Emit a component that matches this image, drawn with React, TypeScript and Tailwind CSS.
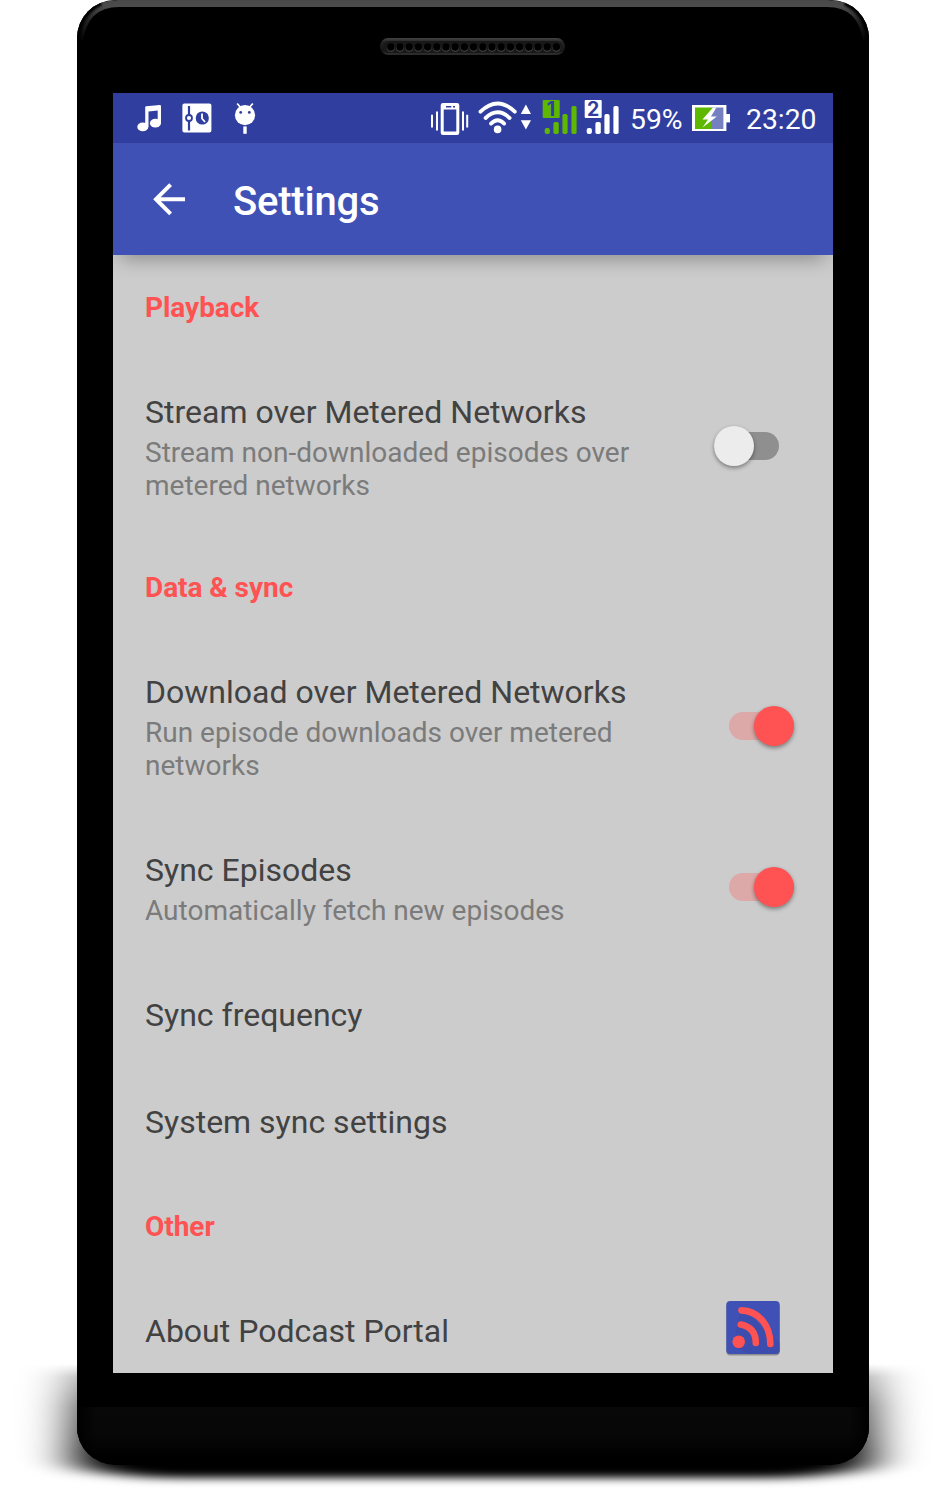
import React from "react";

function StatusIcon({ x, w, className = "", children }: { x: number; w: number; className?: string; children: React.ReactNode }) {
  return (
    <svg width={w} height={50} viewBox={`${x} 93 ${w} 50`} className={`shrink-0 ${className}`}>
      {children}
    </svg>
  );
}

function Signal({ x, n, color, className }: { x: number; n: string; color: string; className?: string }) {
  return (
    <StatusIcon x={0} w={36} className={className}>
      <g fill={color}>
        <rect x="0.7" y="100" width="17" height="18" rx="1" />
        <rect x="2.7" y="128" width="5.2" height="6" rx="2" />
        <rect x="11.4" y="122" width="5.4" height="12" rx="1.8" />
        <rect x="20.4" y="114" width="5.2" height="20" rx="1.8" />
        <rect x="29.4" y="106" width="5.2" height="28" rx="1.8" />
      </g>
      <text x={x} y="115.7" textAnchor="middle" fontSize="19.5" fontWeight="700" fontFamily="Inter, sans-serif" fill="#303f9f">
        {n}
      </text>
    </StatusIcon>
  );
}

function StatusBar() {
  return (
    <div className="flex h-[50px] items-center bg-[#303f9f] text-[28.3px] leading-[50px] text-white">
      <StatusIcon x={136} w={26} className="ml-[23px]">
        <path d="M145.2 107.2Q145.2 106.3 146.2 106.2L159.8 105Q161 105 161 106V123.4H157.7V110.6L148.5 111.6V127H145.2Z" fill="#fff" />
        <ellipse cx="142.8" cy="126.9" rx="5.5" ry="4.4" fill="#fff" />
        <ellipse cx="155.4" cy="123.2" rx="5.5" ry="4.4" fill="#fff" />
      </StatusIcon>
      <StatusIcon x={182} w={30} className="ml-5">
        <rect x="182.4" y="103.4" width="29" height="29" rx="2" fill="#fff" />
        <path d="M189 106V130.5" stroke="#303f9f" strokeWidth="2.2" />
        <circle cx="189" cy="118" r="3" fill="#fff" stroke="#303f9f" strokeWidth="1.8" />
        <circle cx="202.3" cy="118" r="6.6" fill="#303f9f" />
        <path d="M202 113.5V118.5L205 122" stroke="#fff" strokeWidth="1.8" fill="none" />
      </StatusIcon>
      <StatusIcon x={234} w={22} className="ml-[22px]">
        <circle cx="245" cy="115.2" r="10.1" fill="#fff" />
        <path d="M237.2 103.5L241 108M252.8 103.5L249 108" stroke="#fff" strokeWidth="1.8" />
        <circle cx="240.7" cy="112.4" r="1.4" fill="#303f9f" />
        <circle cx="249.3" cy="112.4" r="1.4" fill="#303f9f" />
        <rect x="243.3" y="126.4" width="3.4" height="7.4" fill="#fff" />
      </StatusIcon>

      <StatusIcon x={430} w={39} className="ml-[174px]">
        <path fillRule="evenodd" d="M443 103H457Q459.3 103 459.3 105.2V132.8Q459.3 135 457 135H443Q440.7 135 440.7 132.8V105.2Q440.7 103 443 103ZM443.7 109.6V131.6H456.3V109.6Z" fill="#fff" />
        <path d="M446 106.7H451.3M453 106.7H455" stroke="#303f9f" strokeWidth="1.6" />
        <path d="M432 114.8V127.4M437 111.4V130.4M463 111.4V130.4M467.2 114.8V127.4" stroke="#fff" strokeWidth="2" />
      </StatusIcon>
      <StatusIcon x={478} w={40} className="ml-[9px]">
        <g fill="none" stroke="#fff" strokeWidth="3.8" strokeLinecap="round">
          <path d="M480.5 111.7Q497.6 95.4 514.8 111.7" />
          <path d="M485.6 118Q497.6 106.6 509.6 118" />
          <path d="M491 123.6Q497.6 117 504.2 123.6" />
        </g>
        <circle cx="497.6" cy="129.4" r="3.8" fill="#fff" />
      </StatusIcon>
      <StatusIcon x={520} w={12} className="ml-0.5">
        <path d="M525.9 104.5L531 114H520.8ZM525.9 129.6L531 120.2H520.8Z" fill="#fff" />
      </StatusIcon>
      <Signal x={9} n="1" color="#5fb800" className="ml-[10px]" />
      <Signal x={9.2} n="2" color="#fff" className="ml-[6px]" />
      <span className="ml-[10px] w-[61px] whitespace-nowrap pt-[3px]">59%</span>
      <StatusIcon x={692} w={38} className="ml-[1px]">
        <rect x="692" y="105" width="34.4" height="26" fill="#fff" />
        <rect x="726" y="114" width="4" height="8.4" fill="#fff" />
        <rect x="695" y="107.5" width="16" height="21.5" fill="#5fb800" />
        <rect x="711" y="107.5" width="12.4" height="21.5" fill="#7580c1" />
        <path d="M713 107.6L702.4 119.6H708L702.6 127.6L716.8 116.4H711L716.4 107.6Z" fill="#fff" />
      </StatusIcon>
      <span className="ml-4 whitespace-nowrap pt-[3px]">23:20</span>
    </div>
  );
}

function AppBar() {
  return (
    <div className="flex h-28 items-center bg-[#3f51b5] text-white">
      <svg width="34" height="34" viewBox="0 0 34 34" className="-mt-px ml-[39px] shrink-0">
        <path d="M18.6 2.6L4 17.2L18.6 31.8M4 17.2H33" fill="none" stroke="#fff" strokeWidth="4" />
      </svg>
      <h1 className="ml-[47px] pt-[5px] text-[40px] font-medium leading-[47px] tracking-[-0.2px]">Settings</h1>
    </div>
  );
}

function Section({ children }: { children: React.ReactNode }) {
  return <h2 className="h-[104px] pl-8 pt-9 text-[28px] font-bold leading-[33px] tracking-[-0.05px] text-[#ff5252]">{children}</h2>;
}

function Switch({ on = false }: { on?: boolean }) {
  return on ? (
    <div className="mr-[39px] flex h-7 w-[65px] items-center justify-end rounded-full bg-[#dda8a8]">
      <div className="size-10 shrink-0 rounded-full bg-[#ff5252] shadow-[0_2px_4px_rgba(0,0,0,0.4)]" />
    </div>
  ) : (
    <div className="mr-[54px] flex h-7 w-[65px] items-center rounded-full bg-[#8f8f8f]">
      <div className="size-10 shrink-0 rounded-full bg-[#ececec] shadow-[0_2px_4px_rgba(0,0,0,0.4)]" />
    </div>
  );
}

function Row({ title, summary, className, children }: { title: string; summary?: string; className: string; children?: React.ReactNode }) {
  return (
    <div className={`flex justify-between pl-8 pt-[34px] ${className}`}>
      <div className="w-[520px]">
        <div className="whitespace-nowrap text-[32px] leading-[38px] text-[#424242]">{title}</div>
        {summary && <div className="mt-[5px] text-[28px] leading-[33px] text-[#7b7b7b]">{summary}</div>}
      </div>
      {children}
    </div>
  );
}

function PortalIcon() {
  return (
    <svg width="56" height="58" viewBox="0 0 56 58" className="-mt-3 mr-[52px]">
      <rect x="1.3" y="2.6" width="53.4" height="53" rx="4" fill="#000" opacity="0.3" />
      <rect x="1.3" y="1" width="53.4" height="53" rx="4" fill="#3f51b5" />
      <path d="M16 8L54.7 43V50Q54.7 54 50.7 54H24L8 46Z" fill="#3b4ba9" opacity="0.6" />
      <circle cx="13.7" cy="41.8" r="6.3" fill="#ff5252" />
      <path d="M15.7 24.6Q30.8 27.5 30.8 43M16.5 10.4C34 11 45.3 26 45.3 44" fill="none" stroke="#ff5252" strokeWidth="6.6" strokeLinecap="round" />
    </svg>
  );
}

function Speaker() {
  const holes = Array.from({ length: 19 }, (_, i) => 10.8 + i * 9.2);
  return (
    <svg width="186" height="18" viewBox="0 0 186 18" className="mx-auto block">
      <defs>
        <linearGradient id="grille" x2="0" y2="1">
          <stop offset="0" stopColor="#444" />
          <stop offset="0.25" stopColor="#222" />
          <stop offset="0.8" stopColor="#161616" />
          <stop offset="1" stopColor="#3b3b3b" />
        </linearGradient>
      </defs>
      <rect x="0" y="0" width="185" height="16.8" rx="8.2" fill="url(#grille)" />
      <rect x="3" y="3" width="179" height="12" rx="6" fill="#181818" />
      {holes.map((x) => (
        <g key={x}>
          <circle cx={x} cy="9.8" r="3.9" fill="#484848" />
          <circle cx={x} cy="9" r="3.7" fill="#000" />
        </g>
      ))}
    </svg>
  );
}

function GroundShadow() {
  return (
    <svg width="945" height="1490" viewBox="0 0 945 1490" className="absolute left-0 top-0">
      <defs>
        <filter id="soft" filterUnits="userSpaceOnUse" x="-60" y="1300" width="1065" height="200">
          <feGaussianBlur stdDeviation="25 4.5" />
        </filter>
        <linearGradient id="fade" gradientUnits="userSpaceOnUse" x1="0" x2="0" y1="1364" y2="1450">
          <stop offset="0" stopColor="#fff" stopOpacity="0" />
          <stop offset="0.15" stopColor="#fff" stopOpacity="0.4" />
          <stop offset="0.5" stopColor="#fff" stopOpacity="0.75" />
          <stop offset="1" stopColor="#fff" />
        </linearGradient>
        <mask id="fadeMask" maskUnits="userSpaceOnUse" x="0" y="1350" width="945" height="140">
          <rect y="1350" width="945" height="140" fill="url(#fade)" />
        </mask>
      </defs>
      <g mask="url(#fadeMask)">
        <path d="M72 1350L75 1462L90 1471L150 1478H796L856 1471L871 1462L874 1350Z" fill="#000" filter="url(#soft)" />
      </g>
    </svg>
  );
}

function FrameShine() {
  return (
    <svg width="792" height="1465" viewBox="0 0 792 1465" className="absolute left-0 top-0">
      <defs>
        <linearGradient id="rim" x2="0" y2="1">
          <stop offset="0" stopColor="#484848" />
          <stop offset="0.16" stopColor="#4c4c4c" />
          <stop offset="0.5" stopColor="#222" />
          <stop offset="1" stopColor="#000" />
        </linearGradient>
        <linearGradient id="chin" x2="0" y2="1">
          <stop offset="0" stopColor="#080808" />
          <stop offset="0.5" stopColor="#070707" />
          <stop offset="1" stopColor="#000" />
        </linearGradient>
        <linearGradient id="chinEdges">
          <stop offset="0" stopColor="#000" />
          <stop offset="0.025" stopColor="#000" stopOpacity="0" />
          <stop offset="0.975" stopColor="#000" stopOpacity="0" />
          <stop offset="1" stopColor="#000" />
        </linearGradient>
        <filter id="rimBlur">
          <feGaussianBlur stdDeviation="1.2" />
        </filter>
      </defs>
      <path d="M0 42Q0 0 42 0H750Q792 0 792 42H786Q782 7 750 7H42Q10 7 6 42Z" fill="url(#rim)" />
      <path d="M1 42Q1 14 24 3" fill="none" stroke="#000" strokeWidth="5" filter="url(#rimBlur)" />
      <path d="M791 42Q791 14 768 3" fill="none" stroke="#000" strokeWidth="5" filter="url(#rimBlur)" />
      <rect y="1407" width="792" height="52" fill="url(#chin)" />
      <rect y="1407" width="792" height="52" fill="url(#chinEdges)" />
    </svg>
  );
}

export default function App() {
  return (
    <div className="relative h-[1490px] w-[945px] overflow-hidden bg-white font-['Roboto',sans-serif]">
      <GroundShadow />
      <div className="relative ml-[77px] h-[1465px] w-[792px] overflow-hidden rounded-[38px] bg-black">
        <FrameShine />
        <div className="relative flex h-full flex-col px-9 pt-[38px]">
          <Speaker />
          <div className="mt-[37px] h-[1280px] w-[720px] overflow-hidden bg-[#cccccc]">
            <StatusBar />
            <div className="relative z-10">
              <AppBar />
              <div className="absolute inset-x-0 top-full h-6 overflow-hidden">
                <div className="-mt-5 mx-2 h-5 shadow-[0_3px_20px_rgba(0,0,0,0.36)]" />
              </div>
            </div>
            <Section>Playback</Section>
            <Row className="h-[176px]" title="Stream over Metered Networks" summary="Stream non-downloaded episodes over metered networks">
              <div className="mt-[39px]"><Switch /></div>
            </Row>
            <Section>Data &amp; sync</Section>
            <Row className="h-[178px]" title="Download over Metered Networks" summary="Run episode downloads over metered networks">
              <div className="mt-[39px]"><Switch on /></div>
            </Row>
            <Row className="h-[145px]" title="Sync Episodes" summary="Automatically fetch new episodes">
              <div className="mt-[22px]"><Switch on /></div>
            </Row>
            <Row className="h-[107px]" title="Sync frequency" />
            <Row className="h-[105px]" title="System sync settings" />
            <Section>Other</Section>
            <Row className="h-[95px]" title="About Podcast Portal">
              <PortalIcon />
            </Row>
          </div>
        </div>
      </div>
    </div>
  );
}
